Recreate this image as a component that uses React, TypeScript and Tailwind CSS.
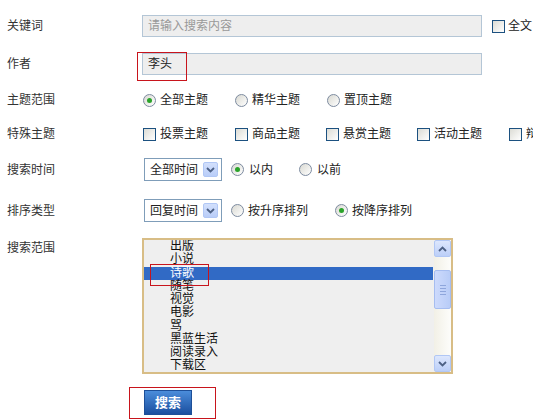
import React from 'react'

const Radio = ({ checked }: { checked?: boolean }) => (
    <span className="w-[13px] h-[13px] shrink-0 rounded-full border border-[#7d8ba0] bg-linear-to-br from-[#d9d9d2] to-white flex items-center justify-center">
        {checked && <span className="w-[5px] h-[5px] rounded-full bg-[#2aa32a]" />}
    </span>
)

const Check = () => (
    <span className="w-[13px] h-[13px] shrink-0 border border-[#1c5180] bg-linear-to-br from-[#dcdcd5] to-white" />
)

const Chevron = ({ up }: { up?: boolean }) => (
    <svg width="9" height="6" viewBox="0 0 9 6">
        <polyline
            points={up ? '1,5 4.5,1.5 8,5' : '1,1 4.5,4.5 8,1'}
            fill="none"
            stroke="#4d6185"
            strokeWidth="1.8"
        />
    </svg>
)

const Select = ({ value }: { value: string }) => (
    <div className="w-[78px] h-[23px] shrink-0 border border-[#7f9db9] bg-white flex items-center">
        <span className="pl-[5px] text-[#222]">{value}</span>
        <span className="ml-auto mr-[3px] w-[15px] h-[15px] rounded-[2px] border border-[#b1c7f5] bg-linear-to-b from-[#d3e0fc] to-[#b9cdf8] flex items-center justify-center">
            <Chevron />
        </span>
    </div>
)

const Label = ({ children, top }: { children: React.ReactNode; top?: boolean }) => (
    <div className={`w-[142px] shrink-0 pl-[7px] text-[#333] ${top ? 'pt-[2px]' : ''}`}>{children}</div>
)

const items = ['出版', '小说', '诗歌', '随笔', '视觉', '电影', '骂', '黑蓝生活', '阅读录入', '下载区']

export default function App() {
    return (
        <div className="w-[533px] h-[420px] overflow-hidden bg-white pt-[15px] text-[12px] leading-[16px] whitespace-nowrap font-['Liberation_Sans','Noto_Sans_CJK_SC',sans-serif]">
            {/* 关键词 */}
            <div className="flex items-center h-[22px]">
                <Label>关键词</Label>
                <div className="w-[340px] h-[22px] shrink-0 border border-[#b4c6d6] bg-[#eeeeee] pl-[5px] flex items-center text-[#999]">
                    请输入搜索内容
                </div>
                <span className="ml-[10px] shrink-0 flex"><Check /></span>
                <span className="ml-[3px] shrink-0 text-[#222]">全文</span>
            </div>

            {/* 作者 */}
            <div className="flex items-center h-[22px] mt-[16px]">
                <Label>作者</Label>
                <div className="relative w-[340px] h-[22px] shrink-0 border border-[#b4c6d6] bg-[#eeeeee] pl-[5px] flex items-center text-[#222]">
                    李头
                    <span className="absolute left-[-6px] top-[-2px] w-[50px] h-[29px] border border-[#c8141c]" />
                </div>
            </div>

            {/* 主题范围 */}
            <div className="flex items-center h-[22px] mt-[14px]">
                <Label>主题范围</Label>
                <div className="flex items-center ml-[1px]">
                    {[
                        { t: '全部主题', c: true },
                        { t: '精华主题', c: false },
                        { t: '置顶主题', c: false },
                    ].map((r, i) => (
                        <div key={i} className="w-[92px] flex items-center gap-[4px] text-[#222]">
                            <Radio checked={r.c} />
                            {r.t}
                        </div>
                    ))}
                </div>
            </div>

            {/* 特殊主题 */}
            <div className="flex items-center h-[22px] mt-[12px]">
                <Label>特殊主题</Label>
                <div className="flex items-center ml-[1px]">
                    {['投票主题', '商品主题', '悬赏主题', '活动主题', '辩论主题'].map((t, i) => (
                        <div key={i} className={`${i === 0 || i === 3 ? 'w-[92px]' : 'w-[91px]'} shrink-0 flex items-center gap-[4px] text-[#222]`}>
                            <Check />
                            {t}
                        </div>
                    ))}
                </div>
            </div>

            {/* 搜索时间 */}
            <div className="flex items-center h-[23px] mt-[13px]">
                <Label>搜索时间</Label>
                <div className="flex items-center ml-[2px]">
                    <Select value="全部时间" />
                    <div className="flex items-center gap-[5px] ml-[9px] text-[#222]">
                        <Radio checked />
                        以内
                    </div>
                    <div className="flex items-center gap-[5px] ml-[26px] text-[#222]">
                        <Radio />
                        以前
                    </div>
                </div>
            </div>

            {/* 排序类型 */}
            <div className="flex items-center h-[23px] mt-[18px]">
                <Label>排序类型</Label>
                <div className="flex items-center ml-[2px]">
                    <Select value="回复时间" />
                    <div className="flex items-center gap-[4px] ml-[9px] text-[#222]">
                        <Radio />
                        按升序排列
                    </div>
                    <div className="flex items-center gap-[4px] ml-[27px] text-[#222]">
                        <Radio checked />
                        按降序排列
                    </div>
                </div>
            </div>

            {/* 搜索范围 */}
            <div className="flex items-start mt-[16px]">
                <Label top>搜索范围</Label>
                <div className="w-[311px] h-[136px] shrink-0 border-2 border-[#d8bd86] bg-[#efefef] flex">
                    <div className="relative flex-1 overflow-hidden">
                        {items.map((t, i) => (
                            <div
                                key={i}
                                className={`h-[13.25px] leading-[13.25px] pl-[26px] mr-[1px] ${i === 2 ? 'bg-[#316ac5] text-white' : 'text-[#111]'}`}
                            >
                                {t}
                            </div>
                        ))}
                        <span className="absolute left-[6px] top-[24px] w-[59px] h-[22px] border border-[#c8141c]" />
                    </div>
                    <div className="w-[17px] shrink-0 flex flex-col bg-linear-to-r from-[#f2f0e6] to-[#fdfdfb]">
                        <div className="h-[17px] rounded-[2px] border border-[#b1c7f5] bg-linear-to-b from-[#dde7fd] to-[#bccff8] flex items-center justify-center">
                            <Chevron up />
                        </div>
                        <div className="mt-[13px] h-[39px] rounded-[2px] border border-[#a6bdf0] bg-linear-to-r from-[#cddafc] to-[#b8ccf7] flex flex-col items-center justify-center gap-[2px]">
                            <span className="w-[6px] h-px bg-[#8ea6dc]" />
                            <span className="w-[6px] h-px bg-[#8ea6dc]" />
                            <span className="w-[6px] h-px bg-[#8ea6dc]" />
                            <span className="w-[6px] h-px bg-[#8ea6dc]" />
                        </div>
                        <div className="mt-auto h-[17px] rounded-[2px] border border-[#b1c7f5] bg-linear-to-b from-[#dde7fd] to-[#bccff8] flex items-center justify-center">
                            <Chevron />
                        </div>
                    </div>
                </div>
            </div>

            {/* 搜索按钮 */}
            <div className="flex mt-[16px]">
                <div className="relative ml-[144px]">
                    <button className="w-[48px] h-[25px] border border-[#1d4f98] bg-linear-to-b from-[#4b8ddb] to-[#1b4f9f] text-white font-bold text-[13px] flex items-center justify-center">
                        搜索
                    </button>
                    <span className="absolute left-[-15px] top-[-3px] w-[87px] h-[32px] border border-[#c8141c]" />
                </div>
            </div>
        </div>
    )
}
